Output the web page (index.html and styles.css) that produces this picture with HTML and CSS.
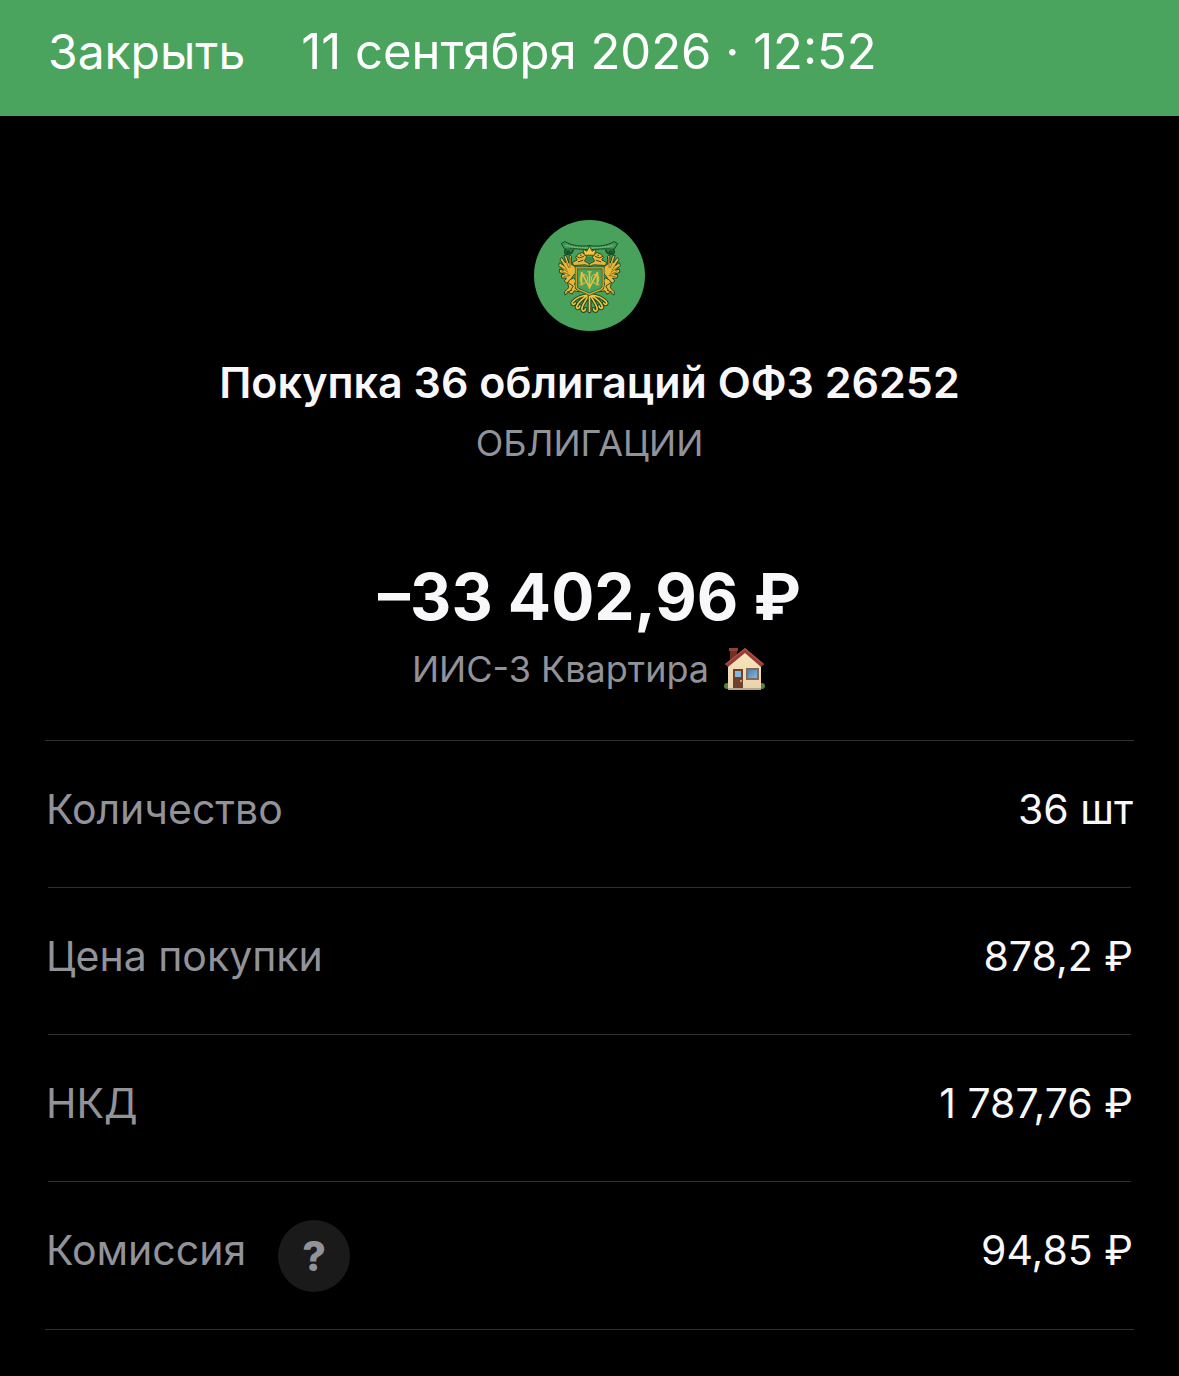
FILE: index.html
```html
<!DOCTYPE html>
<html lang="ru">
<head>
<meta charset="utf-8">
<meta name="viewport" content="width=device-width, initial-scale=1">
<title>Покупка 36 облигаций ОФЗ 26252</title>
<link rel="stylesheet" href="styles.css">
</head>
<body>
<header class="topbar">
  <button class="close" type="button">Закрыть</button>
  <time class="date" datetime="2026-09-11T12:52">11 сентября 2026 · 12:52</time>
</header>
<main class="operation">
  <svg class="emblem" viewBox="14 13 334 334" aria-hidden="true">
    <circle cx="181" cy="180" r="167" fill="#49a25c"/>
    <defs>
      <path id="feathers" d="M178 238C160 240 140 248 130 260C126 267 134 270 138 263M178 238C162 248 146 260 142 274C142 282 151 280 152 272M179 238C172 254 158 268 158 281C160 290 168 288 169 280M181 238V288" fill="none"/>
      <g id="half" stroke-linejoin="round" stroke-linecap="round">
        <!-- wing -->
        <path d="M136 152L126 146L127 122L120 118L119 143L112 121L104 119L109 142L98 126L92 131L103 150L91 141L88 150L103 164L91 161L90 171L106 176L96 178L98 188L112 188L105 196L112 203L124 196L130 183L142 170Z" fill="#e6b83a" stroke="#234b27" stroke-width="3"/>
        <path d="M108 130L118 156M98 140L113 163M96 155L116 170M99 169L119 177M104 183L122 180M123 127L122 156" fill="none" stroke="#5f4e1c" stroke-width="2"/>
        <!-- head and neck -->
        <path d="M168 148L133 150L129 141L144 133L139 125L146 116L158 111L168 115L172 125L166 137L182 145V153Z" fill="#e6b83a" stroke="#26491f" stroke-width="3"/>
        <path d="M142 123L151 127L163 123M147 139L161 134" fill="none" stroke="#493e19" stroke-width="3"/>
        <circle cx="155" cy="119" r="2" fill="#26391c"/>
        <!-- leg and claw -->
        <path d="M122 193L133 187L140 195L136 207L145 216L155 220L151 229L135 226L129 236L118 231L107 239L106 229L118 217L116 203Z" fill="#e6b83a" stroke="#27481f" stroke-width="3"/>
        <path d="M120 204L132 212L124 225M113 230L127 225M138 218L149 223" fill="none" stroke="#493e19" stroke-width="3"/>
        <!-- tail feathers -->
        <use href="#feathers" stroke="#214824" stroke-width="11"/>
        <use href="#feathers" stroke="#efc440" stroke-width="5"/>
        <!-- ribbon -->
        <path d="M181 90C153 94 128 90 107 78L96 84L107 102C133 97 154 101 181 103Z" fill="#3d9857" stroke="#174824" stroke-width="3"/>
        <path d="M110 100C102 108 107 121 118 116C125 111 118 103 113 109C114 119 130 117 132 103" fill="#287744" stroke="#174824" stroke-width="4"/>
      </g>
    </defs>
    <use href="#half"/>
    <use href="#half" transform="translate(362 0) scale(-1 1)"/>
    <path d="M109 89C142 98 158 96 181 97C204 96 220 98 253 89" fill="none" stroke="#9dbd73" stroke-width="4" stroke-dasharray="3 2"/>
    <!-- crown -->
    <path d="M166 119L161 100L173 107L181 92L189 107L201 100L196 119Z" fill="#f3c43c" stroke="#3d4f1b" stroke-width="3"/>
    <path d="M174 124H188L192 133L181 141L170 133Z" fill="#3c894e"/>
    <!-- shield with monogram -->
    <path d="M141 157H222V212C222 225 201 225 181 237C161 225 141 225 141 212Z" fill="#49a25c" stroke="#254f25" stroke-width="8"/>
    <path d="M141 157H222V212C222 225 201 225 181 237C161 225 141 225 141 212Z" fill="none" stroke="#dcae35" stroke-width="4"/>
    <g fill="none" stroke="#e9c03b" stroke-width="5">
      <path d="M157 208V170L181 217L205 170V208M181 168V216"/>
      <path d="M151 208H163M199 208H211M174 169H188" stroke-width="3"/>
      <ellipse cx="164" cy="190" rx="11" ry="13" stroke-width="3"/>
      <ellipse cx="198" cy="190" rx="11" ry="13" stroke-width="3"/>
    </g>
  </svg>
  <h1 class="title">Покупка 36 облигаций ОФЗ 26252</h1>
  <p class="kind">ОБЛИГАЦИИ</p>
  <p class="amount">–33 402,96 ₽</p>
  <p class="account">
    <span>ИИС-3 Квартира</span>
    <svg class="house" viewBox="0 0 44 44" role="img" aria-label="Дом">
      <defs>
        <linearGradient id="wall" x2="0" y2="1"><stop stop-color="#f8e7bd"/><stop offset="1" stop-color="#e9d3aa"/></linearGradient>
        <linearGradient id="pane" x2="1" y2="1"><stop stop-color="#4d82bb"/><stop offset="1" stop-color="#82b5de"/></linearGradient>
      </defs>
      <path d="M7 2H14V14L7 19Z" fill="#702e26"/><path d="M6 1H15V4H6Z" fill="#8f4136"/>
      <circle cx="4" cy="39" r="3" fill="#56813c"/><circle cx="39" cy="39" r="3" fill="#56813c"/>
      <path d="M5 18L22 4L38 18V42H5Z" fill="url(#wall)"/>
      <path d="M22 1L41 17L38 20L22 6L5 20L2 17Z" fill="#933d35"/><path d="M22 1L41 17L40 18L22 3L3 18L2 17Z" fill="#ad4b40"/>
      <path d="M10 22H20V42H10Z" fill="#70412e"/><path d="M12 24H18V30H12Z" fill="#83b8df"/><circle cx="18" cy="34" r="1" fill="#e0b865"/>
      <path d="M23 21H36V33H23Z" fill="#846b58"/><path d="M25 23H34V31H25Z" fill="url(#pane)"/>
      <path d="M5 41H38V43H5Z" fill="#b6a78d"/>
    </svg>
  </p>
  <dl class="details">
    <div class="row"><dt>Количество</dt><dd>36 шт</dd></div>
    <div class="row"><dt>Цена покупки</dt><dd>878,2 ₽</dd></div>
    <div class="row"><dt>НКД</dt><dd>1 787,76 ₽</dd></div>
    <div class="row"><dt>Комиссия <button class="help" type="button" aria-label="О комиссии">?</button></dt><dd>94,85 ₽</dd></div>
  </dl>
</main>
</body>
</html>
```
FILE: styles.css
```css
* { box-sizing: border-box; }

body {
  margin: 0;
  min-height: 100vh;
  background: #000;
  color: #f8f8fa;
  font-family: Inter, "Liberation Sans", sans-serif;
}

button {
  border: 0;
  padding: 0;
  font: inherit;
  cursor: pointer;
}

.topbar {
  display: flex;
  align-items: center;
  gap: 56px;
  padding: 22px 48px 34px;
  background: #4aa45d;
  color: #fff;
  font-size: 49px;
  line-height: 60px;
}

.close {
  background: none;
  color: inherit;
  font-size: 48px;
}

.operation {
  display: flex;
  flex-direction: column;
  align-items: center;
  padding: 104px 45px 46px;
}

.emblem {
  display: block;
  width: 111px;
  height: 111px;
}

.title {
  margin: 24px 0 0;
  font-size: 43px;
  font-weight: 600;
  line-height: 54px;
  text-align: center;
}

.kind {
  margin: 12px 0 0;
  color: #929299;
  font-size: 36px;
  line-height: 44px;
}

.amount {
  margin: 92px 0 0;
  font-size: 64px;
  font-weight: 700;
  line-height: 80px;
}

.account {
  display: flex;
  align-items: center;
  gap: 14px;
  margin: 10px 0 0;
  color: #929299;
  font-size: 36px;
  line-height: 44px;
}

.house {
  width: 44px;
  height: 44px;
}

.details {
  align-self: stretch;
  margin: 49px 0 0;
  border-top: 1px solid #303032;
  font-size: 41px;
  line-height: 60px;
}

.row {
  display: flex;
  justify-content: space-between;
  align-items: flex-start;
  min-height: 147px;
  padding: 38px 1px;
  background: linear-gradient(#303032, #303032) center bottom / calc(100% - 6px) 1px no-repeat;
}

.row:last-child {
  min-height: 148px;
  background-size: 100% 1px;
}

dt {
  display: flex;
  align-items: flex-start;
  gap: 32px;
  color: #929299;
}

dd { margin: 0; }

.help {
  width: 72px;
  height: 72px;
  border-radius: 50%;
  background: #1a1a1b;
  color: #929299;
  font-size: 41px;
  font-weight: 800;
  line-height: 72px;
}
```
